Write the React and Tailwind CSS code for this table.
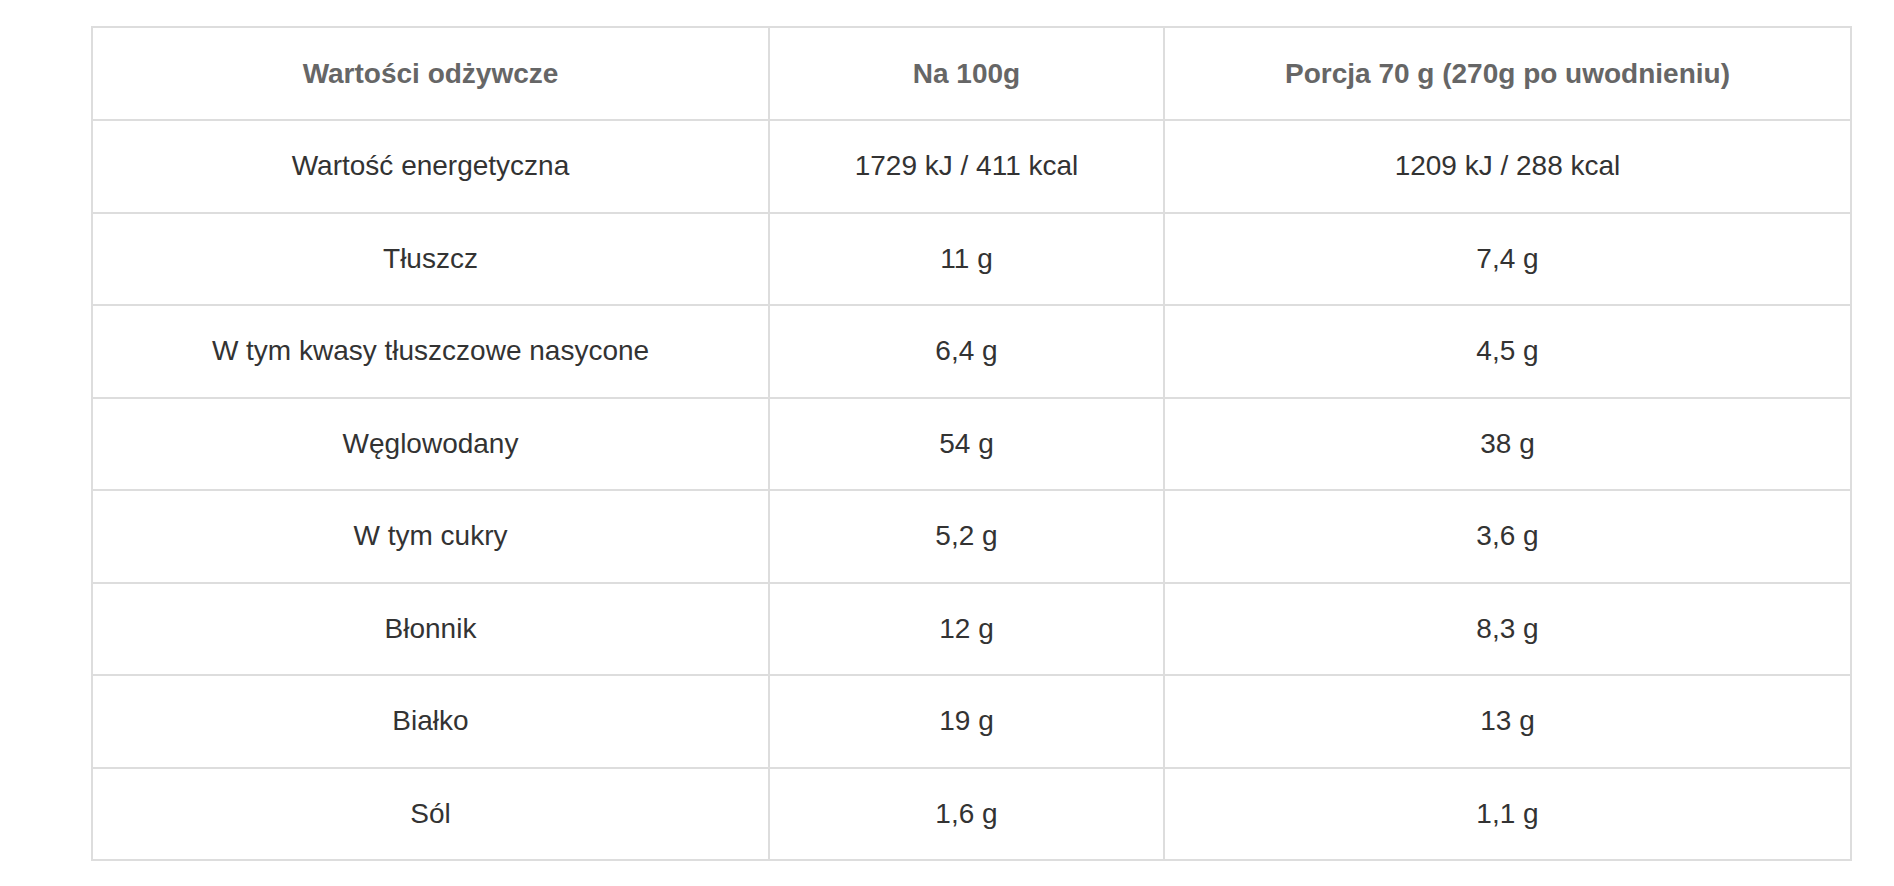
import React from "react";

const rows = [
    ["Wartość energetyczna", "1729 kJ / 411 kcal", "1209 kJ / 288 kcal"],
    ["Tłuszcz", "11 g", "7,4 g"],
    ["W tym kwasy tłuszczowe nasycone", "6,4 g", "4,5 g"],
    ["Węglowodany", "54 g", "38 g"],
    ["W tym cukry", "5,2 g", "3,6 g"],
    ["Błonnik", "12 g", "8,3 g"],
    ["Białko", "19 g", "13 g"],
    ["Sól", "1,6 g", "1,1 g"],
];

export default function App() {
    return (
        <div className="min-h-screen bg-white pt-[26px] pl-[91px] pr-[42px] font-['Liberation_Sans',Arial,sans-serif]">
            <table className="w-full table-fixed border-collapse text-center text-[28px]">
                <colgroup>
                    <col className="w-[677px]" />
                    <col className="w-[395px]" />
                    <col />
                </colgroup>
                <thead>
                    <tr className="h-[93px]">
                        <th className="border-2 border-[#dddddd] font-bold text-[#666666]">Wartości odżywcze</th>
                        <th className="border-2 border-[#dddddd] font-bold text-[#666666]">Na 100g</th>
                        <th className="border-2 border-[#dddddd] font-bold text-[#666666]">Porcja 70 g (270g po uwodnieniu)</th>
                    </tr>
                </thead>
                <tbody>
                    {rows.map((r) => (
                        <tr key={r[0]} className="h-[92.5px]">
                            {r.map((c, i) => (
                                <td key={i} className="border-2 border-[#dddddd] text-[#333333]">{c}</td>
                            ))}
                        </tr>
                    ))}
                </tbody>
            </table>
        </div>
    );
}
